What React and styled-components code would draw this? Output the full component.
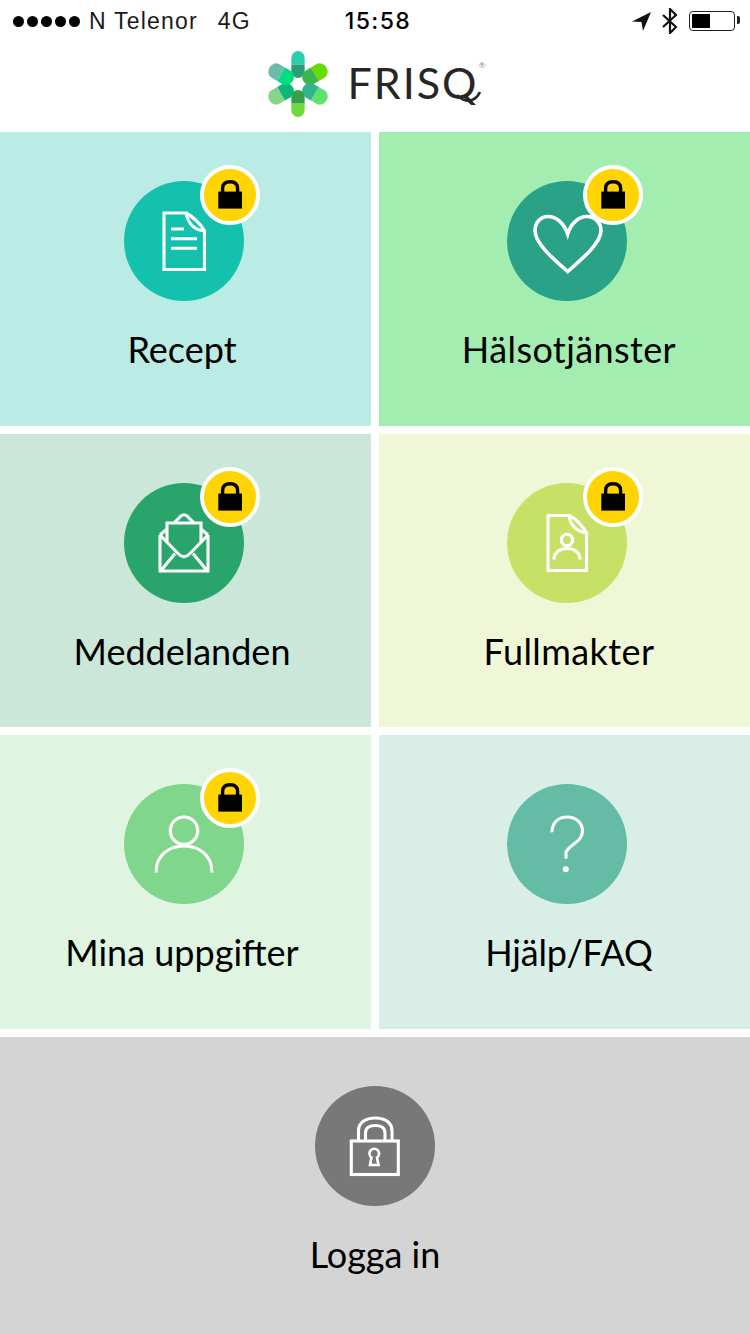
import React from 'react'
import styled, { createGlobalStyle } from 'styled-components'

const GlobalStyle = createGlobalStyle`
  html, body {
    margin: 0;
    padding: 0;
    background: #fff;
  }
  body {
    font-family: "Lato", "Liberation Sans", sans-serif;
    color: #000;
  }
`

const Page = styled.div`
  width: 750px;
  height: 1334px;
  overflow: hidden;
  display: flex;
  flex-direction: column;
`

const StatusBar = styled.div`
  height: 42px;
  display: grid;
  grid-template-columns: 1fr auto 1fr;
  align-items: center;
  padding: 0 11px 0 13px;
  font-family: "Liberation Sans", Arial, sans-serif;
  font-size: 23px;
  letter-spacing: 1.2px;
`

const Carrier = styled.div`
  display: flex;
  align-items: center;
  color: #1a1a1a;
`

const Dots = styled.div`
  display: flex;
  gap: 3px;
  margin-right: 9px;
`

const Dot = styled.span`
  width: 11px;
  height: 11px;
  border-radius: 50%;
  background: #000;
`

const Network = styled.span`
  margin-left: 20px;
`

const Clock = styled.div`
  font-family: "Inter", "Liberation Sans", sans-serif;
  font-weight: 500;
  font-size: 23px;
  letter-spacing: 1.4px;
  padding-left: 4px;
`

const StatusIcons = styled.div`
  display: flex;
  align-items: center;
  justify-content: flex-end;
  gap: 11px;
`

const Battery = styled.div`
  position: relative;
  box-sizing: border-box;
  width: 46px;
  height: 20px;
  margin-right: 4px;
  padding: 2px;
  border: 1.5px solid #222;
  border-radius: 4px;

  &::before {
    content: "";
    display: block;
    width: 18px;
    height: 100%;
    background: #000;
  }

  &::after {
    content: "";
    position: absolute;
    top: 4px;
    right: -5.5px;
    width: 3px;
    height: 8px;
    background: #222;
    border-radius: 0 2px 2px 0;
  }
`

const LogoRow = styled.header`
  height: 90px;
  box-sizing: border-box;
  padding: 0 7px 6px 0;
  display: flex;
  align-items: center;
  justify-content: center;
  gap: 15px;
`

const Wordmark = styled.div`
  position: relative;
  font-weight: 400;
  font-size: 43px;
  line-height: 1;
  letter-spacing: 2px;
  color: #262626;
  padding: 0 0 4px;
`

const Registered = styled.span`
  position: absolute;
  top: 0;
  right: -7px;
  font-size: 8px;
  line-height: 1;
  letter-spacing: 0;
  color: #888;
`

const QTail = styled.svg`
  position: absolute;
  right: -2px;
  bottom: 4px;
`

const Grid = styled.main`
  display: grid;
  grid-template-columns: 371px 371px;
  grid-template-rows: 294px 293px 294px;
  gap: 8px;
`

const Tile = styled.a`
  box-sizing: border-box;
  display: flex;
  flex-direction: column;
  align-items: center;
  padding: 49px ${p => (p.$side === 'left' ? '3px' : '0')} 0 ${p => (p.$side === 'right' ? '5px' : '0')};
  background: ${p => p.$bg};
`

const LoginTile = styled(Tile)`
  margin-top: 8px;
  height: 297px;
`

const Circle = styled.div`
  position: relative;
  width: 120px;
  height: 120px;
  flex: none;
  border-radius: 50%;
  background: ${p => p.$color};

  > svg {
    display: block;
  }
`

const LockBadge = styled.div`
  position: absolute;
  top: -16px;
  right: -16px;
  box-sizing: border-box;
  width: 60px;
  height: 60px;
  border-radius: 50%;
  background: #ffd400;
  border: 4px solid #fff;
  display: flex;
  align-items: center;
  justify-content: center;
`

const Label = styled.div`
  margin-top: 23px;
  font-size: 36px;
  line-height: 50px;
  white-space: nowrap;
  letter-spacing: ${p => p.$tracking || 0}px;
  padding: 0 ${p => (p.$side === 'left' ? '4px' : '0')} 0 ${p => (p.$side === 'right' ? '4px' : '0')};
`

// stroke style shared by the white line icons inside the circles
const LineIcon = ({ children }) => (
  <svg width="120" height="120" viewBox="0 0 120 120" fill="none" stroke="#fff" strokeWidth="3.1">
    {children}
  </svg>
)

const DocumentIcon = () => (
  <LineIcon>
    <path d="M40 32H62C64 42 70 49 80.5 50V88.5H40Z" />
    <path d="M62 32C68 35 77 43 80.5 50" />
    <path d="M47 48H60M47 57.7H73M47 67.3H73" />
  </LineIcon>
)

const HeartIcon = () => (
  <LineIcon>
    <path
      strokeWidth="3.6"
      d="M60.7 53C57 42 49 35.5 41 35.5C33 35.5 28 42 28 49.5C28 62 45 77 60.7 90.5C76 77 94 62 94 49.5C94 42 88 35.5 80 35.5C72 35.5 64 42 60.7 53Z"
    />
  </LineIcon>
)

const EnvelopeIcon = () => (
  <LineIcon>
    <path d="M36 52V88H84V52" />
    <path d="M36 52L54.5 71Q60 76.5 65.5 71L84 52" />
    <path d="M37.5 87L51 70.5M82.5 87L69 70.5" />
    <path d="M43 60V40H77V60" />
    <path d="M50 40L57 33Q60 30.5 63 33L70 40" />
    <path d="M43 46L36 52M77 46L84 52" />
  </LineIcon>
)

const ProxyIcon = () => (
  <LineIcon>
    <path d="M41 32.5H62C63 42 70 49 79.5 50V87.5H41Z" />
    <path d="M62 32.5C68 35 76 43 79.5 50" />
    <circle cx="60" cy="57" r="5.7" />
    <path d="M47 76.5C47 69 53 65.5 60 65.5C67 65.5 73 69 73 76.5" />
  </LineIcon>
)

const PersonIcon = () => (
  <LineIcon>
    <circle cx="60" cy="46.7" r="13.7" />
    <path d="M32 88.5C32 71 45 62 60 62C75 62 88 71 88 88.5" />
  </LineIcon>
)

const QuestionIcon = () => (
  <LineIcon>
    <path strokeLinecap="round" d="M45 47C45.5 38 52 33 60 33C69 33 75.5 39 75.5 47C75.5 58 63 60 59 68V73.5" />
    <circle cx="58.8" cy="85.3" r="3" fill="#fff" stroke="none" />
  </LineIcon>
)

const PadlockIcon = () => (
  <LineIcon>
    <rect x="36.3" y="55" width="47" height="33.5" />
    <path d="M43.5 54V45C43.5 36.5 50.5 32 60.3 32C70 32 77 36.5 77 45V54" />
    <path d="M50.5 54V47C50.5 42 54.5 39.5 60.3 39.5C66 39.5 70 42 70 47V54" />
    <path strokeWidth="2.6" d="M56.5 71.5A4.8 4.8 0 1 1 62 71.5L63.5 79H55Z" />
  </LineIcon>
)

const BadgeLock = () => (
  <svg width="24" height="30" viewBox="0 0 24 30">
    <rect x="0.3" y="11.6" width="23.7" height="17" fill="#000" />
    <path d="M4.6 12V8.5C4.6 4 7.6 1.7 12.1 1.7C16.6 1.7 19.6 4 19.6 8.5V12" fill="none" stroke="#000" strokeWidth="3.4" />
  </svg>
)

// outer and inner colour of each capsule, clockwise from the top
const capsules = [
  ['#2ad0ae', '#2b9e78'],
  ['#66dd00', '#3cb54e'],
  ['#5fe26c', '#33b38d'],
  ['#6fd93f', '#36a146'],
  ['#85d68b', '#0cb878'],
  ['#6cbcaa', '#00dd80'],
]

// the upright capsules are a little slimmer than the slanted ones
const LogoMark = () => (
  <svg width="68" height="68" viewBox="-34 -34 68 68">
    {capsules.map(([outer, inner], i) => (
      <g key={outer} transform={`rotate(${i * 60}) scale(${i % 3 === 0 ? 0.95 : 1.12} 1)`}>
        <path d="M-7 -19.5V-26A7 7 0 0 1 7 -26V-19.5Z" fill={outer} />
        <path d="M-7 -19.5H7V-13A7 7 0 0 1 -7 -13Z" fill={inner} />
      </g>
    ))}
  </svg>
)

const items = [
  { label: 'Recept', bg: '#baebe4', color: '#14c1ad', Icon: DocumentIcon, locked: true, side: 'left' },
  { label: 'Hälsotjänster', bg: '#a3edb0', color: '#2aa287', Icon: HeartIcon, locked: true, side: 'right', tracking: 0.4 },
  { label: 'Meddelanden', bg: '#cae7da', color: '#29a56c', Icon: EnvelopeIcon, locked: true, side: 'left' },
  { label: 'Fullmakter', bg: '#f0f7d7', color: '#c7e066', Icon: ProxyIcon, locked: true, side: 'right', tracking: 0.4 },
  { label: 'Mina uppgifter', bg: '#dff5e1', color: '#80d68b', Icon: PersonIcon, locked: true, side: 'left' },
  { label: 'Hjälp/FAQ', bg: '#d8eee6', color: '#65bca4', Icon: QuestionIcon, locked: false, side: 'right', tracking: -0.2 },
]

export default function App() {
  return (
    <Page>
      <GlobalStyle />
      <StatusBar>
        <Carrier>
          <Dots>
            {[0, 1, 2, 3, 4].map(n => <Dot key={n} />)}
          </Dots>
          N Telenor
          <Network>4G</Network>
        </Carrier>
        <Clock>15:58</Clock>
        <StatusIcons>
          <svg width="19" height="19" viewBox="0 0 19 19">
            <path d="M19 0L0 9.5L9.5 10L11 19Z" fill="#111" />
          </svg>
          <svg width="16" height="26" viewBox="0 0 16 26" fill="none" stroke="#111" strokeWidth="2.2">
            <path d="M1 7L14 19L8 25V1L14 7L1 19" />
          </svg>
          <Battery />
        </StatusIcons>
      </StatusBar>

      <LogoRow>
        <LogoMark />
        <Wordmark>
          FRISQ
          <Registered>®</Registered>
          <QTail width="26" height="14" viewBox="0 0 26 14" fill="none" stroke="#262626" strokeWidth="2.6">
            <path d="M2 5C8 12 19 14 25 2" />
          </QTail>
        </Wordmark>
      </LogoRow>

      <Grid>
        {items.map(({ label, bg, color, Icon, locked, side, tracking }) => (
          <Tile key={label} $bg={bg} $side={side}>
            <Circle $color={color}>
              <Icon />
              {locked && (
                <LockBadge>
                  <BadgeLock />
                </LockBadge>
              )}
            </Circle>
            <Label $side={side} $tracking={tracking}>{label}</Label>
          </Tile>
        ))}
      </Grid>

      <LoginTile $bg="#d4d4d4">
        <Circle $color="#787878">
          <PadlockIcon />
        </Circle>
        <Label>Logga in</Label>
      </LoginTile>
    </Page>
  )
}
